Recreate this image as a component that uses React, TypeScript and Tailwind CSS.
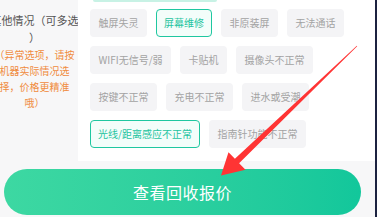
import React from 'react'

type Chip = { label: string; active?: boolean }

const rows: Chip[][] = [
  [{ label: '触屏失灵' }, { label: '屏幕维修', active: true }, { label: '非原装屏' }, { label: '无法通话' }],
  [{ label: 'WIFI无信号/弱' }, { label: '卡贴机' }, { label: '摄像头不正常' }],
  [{ label: '按键不正常' }, { label: '充电不正常' }, { label: '进水或受潮' }],
  [{ label: '光线/距离感应不正常', active: true }, { label: '指南针功能不正常' }],
]

function ChipItem({ chip }: { chip: Chip }) {
  const base = 'h-[28px] flex items-center rounded-[4px] text-[10px] leading-none whitespace-nowrap'
  if (chip.active) {
    return (
      <div className={`${base} px-[7px] border-[1.5px] border-[#1fc7a0] bg-[#f3fdfa] text-[#1fc4a0]`}>
        {chip.label}
      </div>
    )
  }
  return <div className={`${base} px-[8.5px] bg-[#f4f4f6] text-[#a3a3a3]`}>{chip.label}</div>
}

function Arrow() {
  // 细尾巴 → 箭头，从右上指向按钮
  return (
    <svg className="absolute left-0 top-0 pointer-events-none" width="377" height="217" viewBox="0 0 377 217">
      <polygon
        points="357.2,46.2 239.1,163.2 245.5,169.8 221,175.5 228.5,152.2 234.9,158.8 356.8,45.8"
        fill="#ff3434"
      />
    </svg>
  )
}

export default function App() {
  return (
    <div className="relative w-[377px] h-[217px] overflow-hidden bg-[#f7f7f8] border-r-2 border-[#1c2240] font-['Noto_Sans_CJK_SC',sans-serif]">
      <div className="flex h-[161px]">
        {/* 左侧说明 */}
        <div className="w-[78px] shrink-0 overflow-hidden">
          <div className="w-[92px] -ml-[11.5px] text-center pt-[11.5px]">
            <div className="text-[11px] leading-[17px] text-[#555]">
              <div className="whitespace-nowrap">其他情况（可多选</div>
              <div>）</div>
            </div>
            <div className="mt-[1.5px] text-[10px] leading-[16px] text-[#f08c3e]">
              <div className="whitespace-nowrap">（异常选项，请按</div>
              <div className="whitespace-nowrap">机器实际情况选</div>
              <div className="whitespace-nowrap">择，价格更精准</div>
              <div>哦）</div>
            </div>
          </div>
        </div>

        {/* 选项 */}
        <div className="flex-1 bg-white pl-[12px]">
          <div className="h-[2px] w-[124px] ml-[3px] rounded-b-[2px] bg-[#c8f2e5]" />
          <div className="mt-[7px] flex flex-col gap-[9px]">
            {rows.map((row, i) => (
              <div key={i} className="flex gap-[9px]">
                {row.map((c) => (
                  <ChipItem key={c.label} chip={c} />
                ))}
              </div>
            ))}
          </div>
        </div>
      </div>

      <button className="mt-[8px] ml-[4px] w-[357px] h-[46px] rounded-full bg-gradient-to-r from-[#3dd8a2] to-[#12c79b] text-white text-[16px] tracking-[0.5px] flex items-center justify-center">
        查看回收报价
      </button>

      <Arrow />
    </div>
  )
}
